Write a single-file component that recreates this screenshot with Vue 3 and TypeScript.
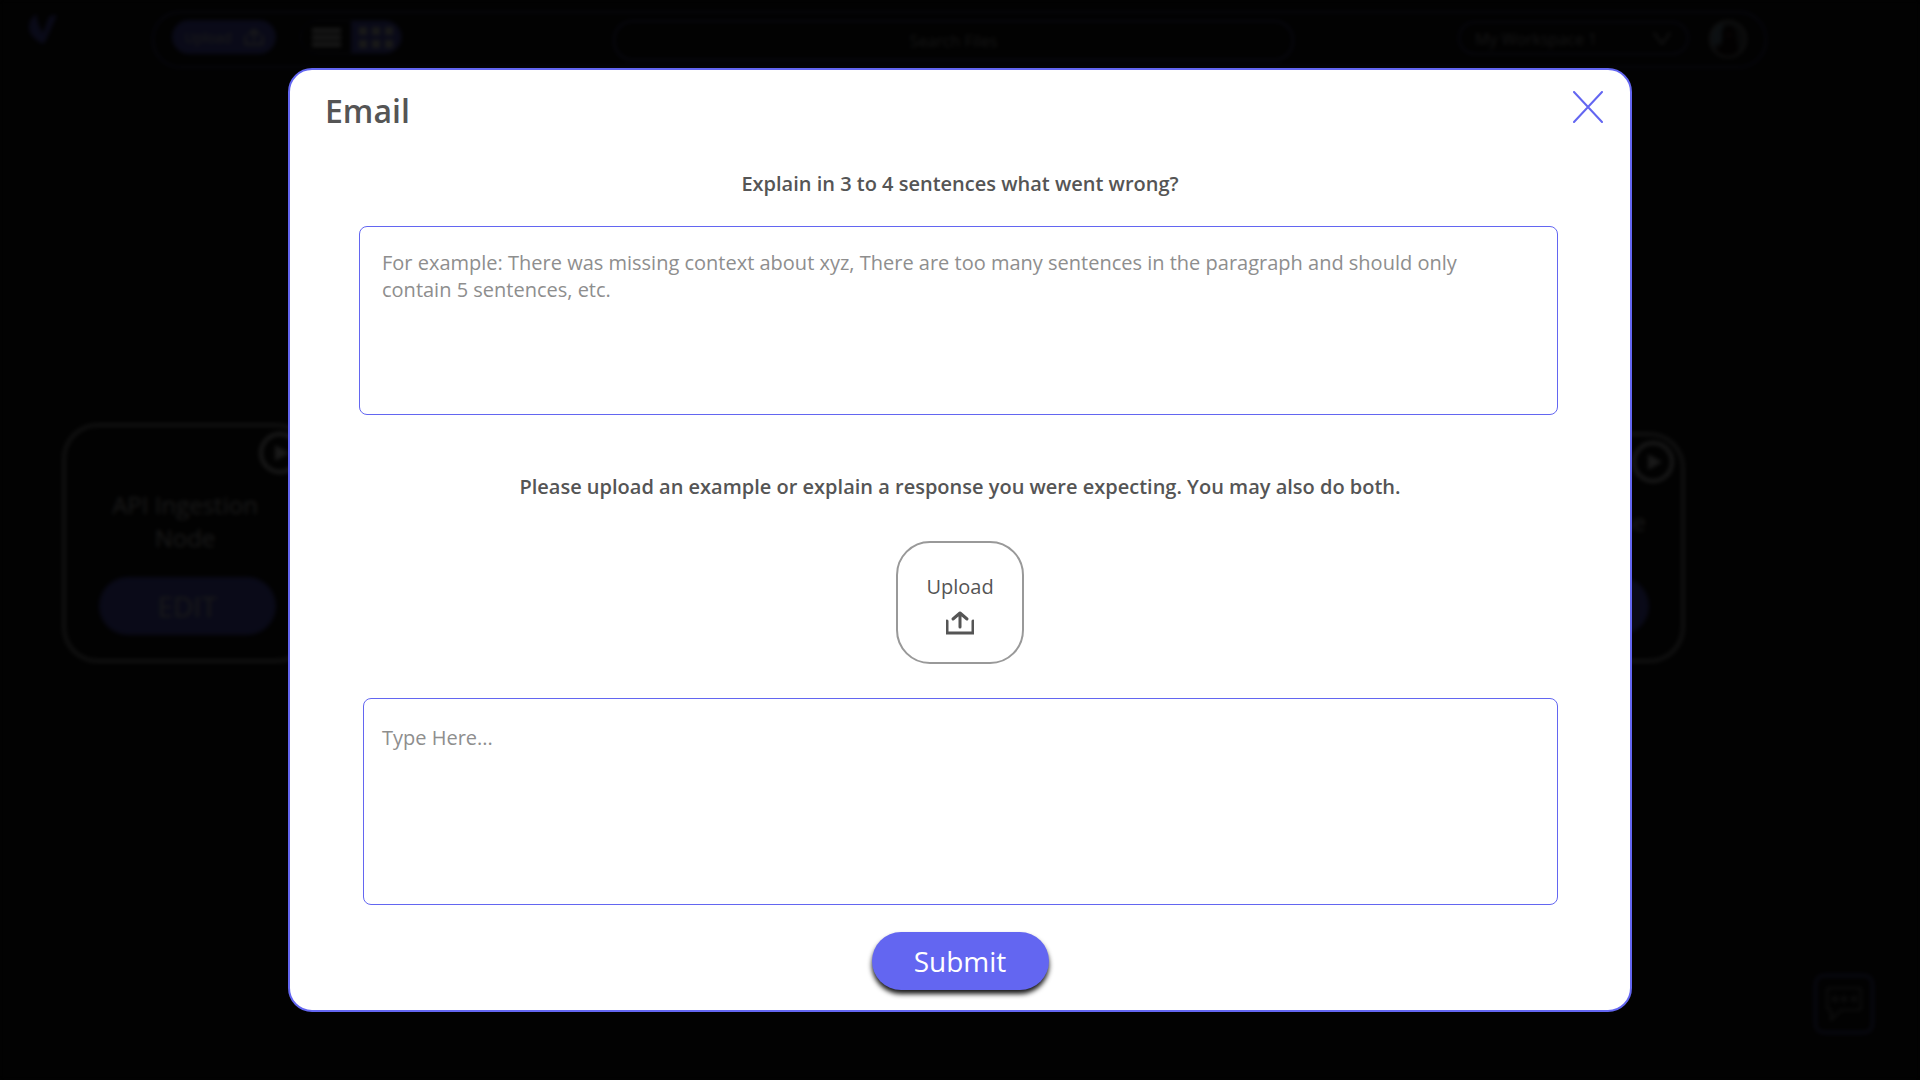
<script setup lang="ts">
import { ref } from 'vue'

interface FlowNode {
  id: string
  title: string
  x: string
  y: string
  height: string
}

const nodes: FlowNode[] = [
  { id: 'ingest', title: 'API Ingestion Node', x: '62px', y: '423px', height: '240px' },
  { id: 'email', title: 'Email Response', x: 'calc(100% - 485px)', y: '432px', height: '231px' },
]

const gridCells = [0, 1, 2, 3, 4, 5]
const problem = ref('')
const expected = ref('')
</script>

<template>
  <div class="page">
    <div class="workspace" inert>
      <header class="topbar">
        <svg class="logo" viewBox="0 0 28 30" aria-hidden="true">
          <path d="M8 0C7 6 11 14 14 19L20 3Q21 1 28 1L17 26Q15 31 12 29C5 25 0 20 0 13Q0 4 8 0Z" />
        </svg>
        <div class="toolbar">
          <button class="upload-small" type="button">
            Upload
            <svg viewBox="0 0 28 24" width="20" height="18" aria-hidden="true">
              <path d="M2 11V22H26V11M14 16V2M7 8L14 2L21 8" />
            </svg>
          </button>
          <div class="view-toggle">
            <button type="button" aria-label="List view" class="list-view">
              <span></span><span></span><span></span>
            </button>
            <button type="button" aria-label="Grid view" class="grid-view">
              <span v-for="cell in gridCells" :key="cell"></span>
            </button>
          </div>
          <input class="search" type="text" placeholder="Search Files" aria-label="Search Files" />
          <div class="picker">
            <select aria-label="Workspace">
              <option>My Workspace 1</option>
            </select>
            <svg viewBox="0 0 20 14" width="20" height="14" aria-hidden="true">
              <path d="M2 1L10 12L18 1" />
            </svg>
          </div>
          <svg class="avatar" viewBox="0 0 38 38" aria-hidden="true">
            <circle cx="19" cy="19" r="18" fill="#565c60" />
            <path d="M2 13Q6 2 14 3L13 22L3 26Z" fill="#7c9fb4" />
            <path d="M13 14Q13 6 20 6Q27 6 27 14L29 28Q31 35 19 37Q8 36 7 29L13 24Z" fill="#170c0c" />
            <circle cx="20" cy="15" r="3" fill="#4c2622" />
            <circle cx="19" cy="19" r="18" fill="none" stroke="#aaa" stroke-width="2" />
          </svg>
        </div>
      </header>

      <article
        v-for="node in nodes"
        :key="node.id"
        class="node"
        :style="{ left: node.x, top: node.y, height: node.height }"
      >
        <button class="play" type="button" aria-label="Run node">
          <svg viewBox="0 0 16 18" width="16" height="18" aria-hidden="true"><path d="M1 1L15 9L1 17Z" /></svg>
        </button>
        <h3>{{ node.title }}</h3>
        <button class="edit" type="button">EDIT</button>
      </article>

      <button class="chat" type="button" aria-label="Chat">
        <svg viewBox="0 0 36 36" width="36" height="36" aria-hidden="true">
          <path d="M3 2H33Q35 2 35 5V21Q35 24 32 24H15L5 34V24Q1 24 1 21V5Q1 2 3 2Z" />
          <circle cx="9" cy="13" r="2" /><circle cx="18" cy="13" r="2" /><circle cx="28" cy="13" r="2" />
        </svg>
      </button>
    </div>

    <div class="overlay">
      <section class="modal" role="dialog" aria-modal="true" aria-labelledby="modal-title">
        <div class="modal-head">
          <h1 id="modal-title">Email</h1>
          <button class="close" type="button" aria-label="Close">
            <svg viewBox="0 0 30 32" width="30" height="32" aria-hidden="true">
              <path d="M1 1L29 31M29 1L1 31" />
            </svg>
          </button>
        </div>
        <form class="feedback" @submit.prevent>
          <label for="problem">Explain in 3 to 4 sentences what went wrong?</label>
          <textarea
            id="problem"
            v-model="problem"
            class="problem"
            placeholder="For example: There was missing context about xyz, There are too many sentences in the paragraph and should only contain 5 sentences, etc."
          ></textarea>
          <label class="second" for="expected">Please upload an example or explain a response you were expecting. You may also do both.</label>
          <button class="upload" type="button">
            Upload
            <svg viewBox="0 0 28 24" width="28" height="24" aria-hidden="true">
              <path d="M1 10V22H27V10" stroke-linejoin="miter" />
              <path d="M14 16V2M7 8L14 2L21 8" />
            </svg>
          </button>
          <textarea id="expected" v-model="expected" class="expected" placeholder="Type Here..."></textarea>
          <button class="submit" type="submit">Submit</button>
        </form>
      </section>
    </div>
  </div>
</template>

<style>
body {
  margin: 0;
  background: #141414;
}
</style>

<style scoped>
.page,
.page * {
  box-sizing: border-box;
}

.page {
  font-family: 'Open Sans', 'Noto Sans', sans-serif;
  color: #555;
}

button,
input,
select,
textarea {
  margin: 0;
  padding: 0;
  border: 0;
  background: none;
  font: inherit;
  color: inherit;
}

svg {
  display: block;
  fill: none;
  stroke: currentColor;
  stroke-width: 3;
  stroke-linecap: round;
  stroke-linejoin: round;
}

.workspace {
  position: relative;
  min-height: 100vh;
  background: #141414;
}

.topbar {
  display: flex;
  align-items: flex-start;
  padding: 11px 153px 0 29px;
}

.logo {
  width: 28px;
  height: 30px;
  margin: 3px 95px 0 0;
  fill: #6366f1;
  stroke: none;
}

.toolbar {
  flex: 1;
  display: flex;
  align-items: flex-start;
  height: 57px;
  padding: 7px 18px 0;
  border: 2px solid #4f4f9c;
  border-radius: 28px;
}

.upload-small {
  display: flex;
  align-items: center;
  justify-content: center;
  gap: 12px;
  width: 104px;
  height: 34px;
  margin-right: 24px;
  border-radius: 17px;
  background: #6366f1;
  color: #fff;
  font-size: 14px;
}

.view-toggle {
  display: flex;
  width: 102px;
  height: 34px;
  margin-right: 211px;
  overflow: hidden;
  border: 1px solid #4f4f9c;
  border-radius: 17px;
}

.list-view,
.grid-view {
  flex: 1;
  display: grid;
  place-content: center;
}

.list-view {
  gap: 2px;
}

.list-view span {
  width: 29px;
  height: 5px;
  background: #eee;
}

.grid-view {
  grid-template-columns: repeat(3, 8px);
  gap: 5px;
  background: #6366f1;
}

.grid-view span {
  height: 8px;
  background: #ffe;
}

.search {
  flex: 1;
  min-width: 0;
  height: 41px;
  margin-right: 164px;
  border: 2px solid #5a5aac;
  border-radius: 20px;
  font-size: 16px;
  text-align: center;
}

.search::placeholder {
  color: #ccc;
  opacity: 1;
}

.picker {
  position: relative;
  width: 231px;
  margin: 1px 20px 0 0;
  color: #ccc;
}

.picker select {
  width: 100%;
  height: 34px;
  padding: 2px 15px 0;
  appearance: none;
  border: 2px solid #4f4f9c;
  border-radius: 17px;
  font-size: 16px;
}

.picker svg {
  position: absolute;
  top: 11px;
  right: 17px;
  stroke-width: 2;
}

.avatar {
  width: 38px;
  height: 38px;
  stroke: none;
}

.node {
  position: absolute;
  display: flex;
  flex-direction: column;
  align-items: center;
  justify-content: flex-end;
  width: 250px;
  padding-bottom: 24px;
  border: 4px solid #aaa;
  border-radius: 36px;
}

.node h3 {
  display: grid;
  align-content: center;
  width: 180px;
  min-height: 66px;
  margin: 0 4px 23px 0;
  color: #fff;
  font-size: 24px;
  font-weight: 400;
  line-height: 33px;
  text-align: center;
}

.play {
  position: absolute;
  top: 5px;
  right: 7px;
  display: grid;
  place-items: center;
  width: 42px;
  height: 42px;
  padding-left: 4px;
  border: 4px solid #fff;
  border-radius: 50%;
}

.play svg {
  fill: #fff;
  stroke: none;
}

.edit,
.submit {
  width: 177px;
  height: 58px;
  border-radius: 29px;
  background: #6366f1;
  font-size: 28px;
  line-height: 38px;
}

.edit {
  color: #fff;
}

.chat {
  position: absolute;
  right: 46px;
  bottom: 46px;
  display: grid;
  place-items: center;
  width: 60px;
  height: 60px;
  border: 3px solid #6366c0;
  border-radius: 10px;
  color: #999;
}

.chat svg {
  stroke-width: 2;
}

.overlay {
  position: fixed;
  inset: 0;
  display: grid;
  justify-items: center;
  align-items: center;
  overflow: auto;
  background: rgba(0, 0, 0, 0.9);
  backdrop-filter: blur(2px);
}

.modal {
  width: 70%;
  border: 2px solid #6366f1;
  border-radius: 24px;
  background: #fff;
}

.modal-head {
  display: flex;
  align-items: flex-start;
  justify-content: space-between;
  padding: 19px 27px 0 35px;
}

h1 {
  margin: 0;
  font-size: 32px;
  font-weight: 600;
  line-height: 44px;
}

.close {
  margin-top: 2px;
  color: #6366f1;
}

.close svg {
  stroke-width: 2;
}

.feedback {
  display: flex;
  flex-direction: column;
  align-items: center;
  padding: 37px 0 20px;
  font-size: 20px;
  line-height: 27px;
}

label {
  margin-bottom: 29px;
  font-weight: 600;
  text-align: center;
}

.second {
  margin: 58px 0 41px;
}

textarea {
  display: block;
  align-self: stretch;
  border: 1px solid #6366f1;
  border-radius: 8px;
  resize: none;
  outline: none;
}

textarea::placeholder {
  color: #8e8e8e;
  opacity: 1;
}

.problem {
  height: 189px;
  margin: 0 72px 0 69px;
  padding: 22px 80px 20px 22px;
}

.expected {
  height: 207px;
  margin: 34px 72px 27px 73px;
  padding: 25px 18px;
}

.upload {
  display: flex;
  flex-direction: column;
  align-items: center;
  justify-content: center;
  gap: 11px;
  width: 128px;
  height: 123px;
  padding-top: 3px;
  border: 2px solid #999;
  border-radius: 34px;
}

.submit {
  color: #fff;
  box-shadow: 0 4px 5px rgba(0, 0, 0, 0.9);
}
</style>
